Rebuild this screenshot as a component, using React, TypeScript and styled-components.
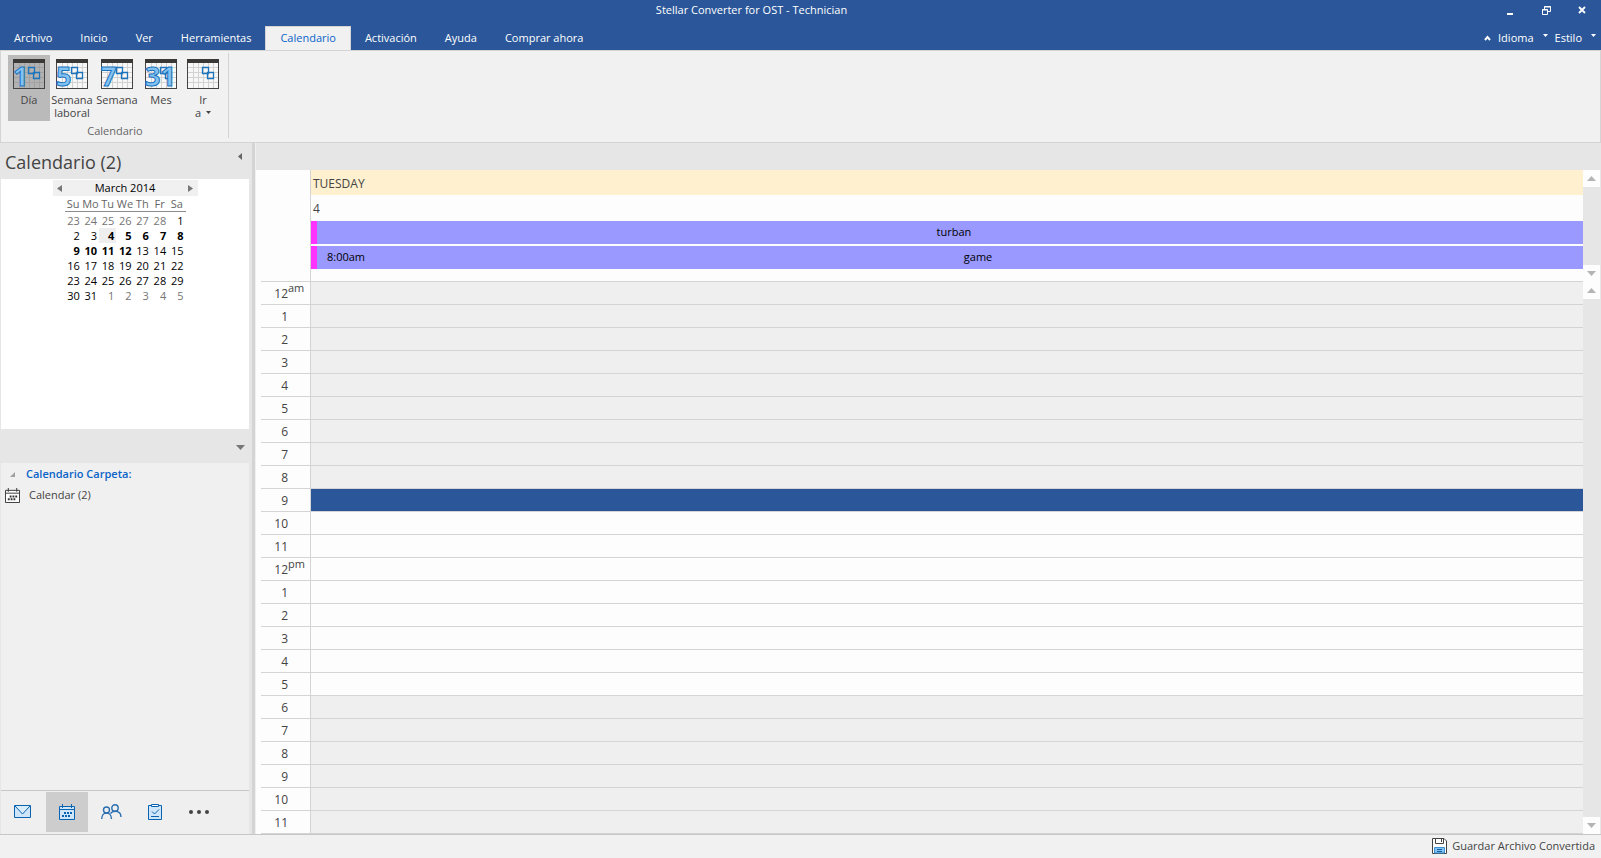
import React from 'react';
import styled, { createGlobalStyle } from 'styled-components';

const font = '"Open Sans", "Noto Sans", sans-serif';
const accent = '#2b579a';
const line = '#d4d4d4';

const GlobalStyle = createGlobalStyle`
  * { box-sizing: border-box; }
  body { margin: 0; background: #f0f0f0; color: #444; font: 11px/14px ${font}; }
  button { font: inherit; color: inherit; border: 0; padding: 0; background: none; cursor: default; }
  table { border-spacing: 0; }
  th, td { padding: 0; font-weight: 400; }
  svg { display: block; flex: none; }
`;

const Window = styled.div`
  min-height: 100vh;
  display: flex;
  flex-direction: column;
`;

const TitleBar = styled.header`
  display: grid;
  grid-template-columns: 1fr auto 1fr;
  height: 26px;
  padding-right: 8px;
  background: ${accent};
  color: #fff;
`;

const Title = styled.h1`
  grid-column: 2;
  margin: 0;
  padding-top: 3px;
  padding-right: 90px;
  font-size: 11px;
  line-height: 14px;
  font-weight: 400;
`;

const WindowButtons = styled.div`
  display: flex;
  justify-content: flex-end;
  gap: 14px;
`;

const WindowButton = styled.button`
  display: flex;
  align-items: center;
  justify-content: center;
  width: 22px;
  height: 20px;
`;

const MenuBar = styled.nav`
  display: flex;
  height: 24px;
  background: ${accent};
  color: #fff;
`;

const Tab = styled.button<{ $active?: boolean }>`
  height: ${p => (p.$active ? 25 : 24)}px;
  padding: 0 ${p => (p.$active ? 14 : 13)}px 2px;
  border: 1px solid ${p => (p.$active ? line : 'transparent')};
  border-bottom: 0;
  background: ${p => (p.$active ? '#f1f1f1' : 'transparent')};
  color: ${p => (p.$active ? '#0a64c8' : '#fff')};
`;

const MenuTools = styled.div`
  display: flex;
  align-items: center;
  gap: 7px;
  margin-left: auto;
  padding-right: 5px;
`;

const ToolButton = styled.button`
  display: flex;
  align-items: center;
  gap: 9px;
  height: 24px;
  svg { margin-top: -5px; }
`;

const Ribbon = styled.section`
  display: flex;
  height: 93px;
  padding: 2px 0 4px 7px;
  border: 1px solid ${line};
  background: #f1f1f1;
`;

const RibbonGroup = styled.div`
  display: flex;
  flex-direction: column;
  padding: 2px 4px 0 0;
  border-right: 1px solid ${line};
`;

const RibbonItems = styled.div`
  display: flex;
`;

const RibbonButton = styled.button<{ $width: number; $active?: boolean }>`
  display: flex;
  flex-direction: column;
  align-items: center;
  gap: 4px;
  width: ${p => p.$width}px;
  height: 66px;
  padding-top: 4px;
  background: ${p => (p.$active ? '#bababa' : 'transparent')};
`;

const RibbonText = styled.span`
  display: block;
  line-height: 13px;
  white-space: pre;
  text-align: center;
`;

const DropLine = styled.span`
  display: flex;
  align-items: center;
  justify-content: center;
  gap: 5px;
`;

const GroupName = styled.div`
  padding: 3px 2px 0 0;
  text-align: center;
  color: #666;
`;

const Workspace = styled.div`
  flex: 1;
  display: flex;
  border-bottom: 1px solid #c6c6c6;
  background: #e6e6e6;
`;

const Sidebar = styled.aside`
  display: flex;
  flex-direction: column;
  flex: none;
  width: 252px;
  padding: 0 3px 0 1px;
`;

const SideHeader = styled.div`
  display: flex;
  justify-content: space-between;
  height: 36px;
  padding: 6px 7px 0 4px;
`;

const SideTitle = styled.h2`
  margin: 0;
  font-size: 18px;
  line-height: 26px;
  font-weight: 400;
`;

const IconButton = styled.button`
  display: flex;
  align-items: center;
  justify-content: center;
  height: 14px;
`;

const DatePanel = styled.div`
  display: flex;
  flex-direction: column;
  align-items: center;
  height: 250px;
  padding-top: 1px;
  background: #fff;
`;

const MonthBar = styled.div`
  display: flex;
  align-items: center;
  justify-content: space-between;
  width: 145px;
  height: 16px;
  padding: 0 4px;
  background: #f0f0f0;
  color: #000;
`;

const MonthTable = styled.table`
  width: 121px;
  table-layout: fixed;
  color: #000;
  line-height: 15px;
  thead th { height: 15px; border-bottom: 1px solid #8c8c8c; color: #666; text-align: center; white-space: nowrap; }
  tbody::before { content: ''; display: block; height: 1px; }
`;

const DayCell = styled.td<{ $bold?: boolean; $muted?: boolean; $current?: boolean }>`
  height: 15px;
  padding-right: 2px;
  text-align: right;
  font-weight: ${p => (p.$bold ? 700 : 400)};
  color: ${p => (p.$muted ? '#757575' : '#000')};
  background: ${p => (p.$current ? '#efefef' : 'transparent')};
`;

const PanelSplitter = styled.div`
  display: flex;
  align-items: center;
  justify-content: flex-end;
  height: 34px;
  padding: 2px 4px 0 0;
`;

const FolderPanel = styled.div`
  flex: 1;
  background: #f0f0f0;
`;

const FolderHeading = styled.h3`
  display: flex;
  align-items: center;
  gap: 11px;
  height: 22px;
  margin: 0;
  padding-left: 9px;
  font-size: 11px;
  line-height: 14px;
  font-weight: 600;
  color: #0a64c8;
`;

const FolderItem = styled.button`
  display: flex;
  align-items: center;
  gap: 9px;
  width: 100%;
  height: 20px;
  padding-left: 4px;
`;

const NavBar = styled.nav`
  display: flex;
  align-items: flex-start;
  height: 44px;
  padding-top: 1px;
  border-top: 1px solid #c6c6c6;
  background: #efefef;
`;

const NavButton = styled.button<{ $active?: boolean }>`
  display: flex;
  align-items: center;
  justify-content: center;
  width: 44px;
  height: 40px;
  border: 0 solid transparent;
  border-width: 0 1px;
  background: ${p => (p.$active ? '#cdcdcd' : 'transparent')};
  background-clip: padding-box;
`;

const Divider = styled.div`
  flex: none;
  width: 4px;
  background: #d4d4d4;
  border-right: 1px solid #f0f0f0;
`;

const Main = styled.main`
  flex: 1;
  min-width: 0;
  display: flex;
  flex-direction: column;
  padding: 27px 1px 0 0;
`;

const Region = styled.div`
  display: flex;
  background: #fdfdfd;
`;

const HeaderGutter = styled.div`
  flex: none;
  width: 55px;
  padding-left: 5px;
  border-right: 1px solid ${line};
  display: flex;
  align-items: flex-end;
  &::after { content: ''; flex: 1; height: 1px; background: ${line}; }
`;

const DayHeader = styled.div`
  flex: 1;
  display: flex;
  flex-direction: column;
  height: 112px;
  border-bottom: 1px solid ${line};
`;

const DayName = styled.div`
  padding-left: 2px;
  height: 25px;
  line-height: 28px;
  font-size: 12px;
  background: #fff0cf;
`;

const DayNumber = styled.div`
  padding-left: 2px;
  height: 26px;
  line-height: 28px;
  font-size: 12px;
`;

const EventBar = styled.div`
  display: flex;
  height: 23px;
  line-height: 21px;
  margin-bottom: 2px;
  border-left: 6px solid #ff33ff;
  background: #9999ff;
  color: #000;
`;

const EventTime = styled.span`
  padding-left: 10px;
`;

const EventTitle = styled.span`
  flex: 1;
  padding-left: 8px;
  text-align: center;
`;

const HourTable = styled.table`
  flex: 1;
  margin-left: 5px;
  table-layout: fixed;
`;

const HourRow = styled.tr<{ $tone: string }>`
  th, td { height: 23px; border-bottom: 1px solid ${line}; }
  td { background: ${p => p.$tone}; }
`;

const HourLabel = styled.th`
  width: 50px;
  border-right: 1px solid ${line};
`;

const HourText = styled.span`
  display: flex;
  height: 22px;
  line-height: 24px;
  font-size: 12px;
`;

const HourNumber = styled.span`
  width: 27px;
  text-align: right;
`;

const HourSuffix = styled.span`
  font-size: 11px;
  line-height: 12px;
`;

const ScrollTrack = styled.div`
  display: flex;
  flex-direction: column;
  justify-content: space-between;
  width: 17px;
  flex: none;
  background: #e6e6e6;
`;

const ScrollButton = styled.button`
  display: flex;
  align-items: center;
  justify-content: center;
  height: 17px;
  background: #fdfdfd;
`;

const StatusBar = styled.footer`
  display: flex;
  justify-content: flex-end;
  align-items: center;
  height: 23px;
  padding: 0 6px 2px 0;
  background: #f1f1f1;
`;

const SaveButton = styled.button`
  display: flex;
  align-items: center;
  gap: 5px;
`;

const Triangle = ({ dir, w = 8, h = 4, color = '#b4b4b4' }: { dir: 'up' | 'down' | 'left' | 'right'; w?: number; h?: number; color?: string }) => {
  const points = {
    up: `0,${h} ${w / 2},0 ${w},${h}`,
    down: `0,0 ${w},0 ${w / 2},${h}`,
    left: `${w},0 ${w},${h} 0,${h / 2}`,
    right: `0,0 ${w},${h / 2} 0,${h}`,
  }[dir];
  return (
    <svg width={w} height={h} aria-hidden="true"><polygon points={points} fill={color} /></svg>
  );
};

const RibbonIcon = ({ digits, dark }: { digits?: string; dark?: boolean }) => (
  <svg width="32" height="30" viewBox="0 0 32 30" overflow="visible" aria-hidden="true">
    <rect x=".5" y=".5" width="31" height="29" fill={dark ? '#b2b2b2' : '#f7f7f7'} stroke="#444" />
    <path d="M6.5 4v25M11.5 4v25M16.5 4v25M21.5 4v25M26.5 4v25M1 8.500h30M1 13.500h30M1 18.500h30M1 23.500h30" stroke={dark ? '#a2a2a2' : '#d2d2d2'} fill="none" />
    <path d="M0 0h32v4H0z" fill="#3b3838" />
    <path d="M15.500 8.500h6v6h-6zM20.500 13.500h6v6h-6z" fill="none" stroke="#1c74bc" strokeWidth="1.300" />
    {digits && (
      <text x="0" y="27" fontFamily={font} fontSize="27" fontWeight="700" fill="#83c3f3" stroke="#1c74bc" strokeWidth="1">{digits}</text>
    )}
  </svg>
);

const CalendarGlyph = ({ size, color, fill }: { size: number; color: string; fill: string }) => (
  <svg width={size} height={size} viewBox="0 0 16 16" aria-hidden="true">
    <path d="M.5 2.500h15v13H.5z" fill={fill} stroke={color} />
    <path d="M.5 5.500h15M3.500 0v4M12.500 0v4" stroke={color} />
    <path d="M5 8h2v2H5zM8 8h2v2H8zM11 8h2v2h-2zM3 11h2v2H3zM6 11h2v2H6zM9 11h2v2H9z" fill={color} />
  </svg>
);

const blue = '#0a63b0';

const MailGlyph = () => (
  <svg width="18" height="14" aria-hidden="true">
    <path d="M.5 .5h16v12H.5z" fill="#cfe6fa" stroke={blue} />
    <path d="M1 1l7.500 8L16 1" fill="#d9ecfc" stroke={blue} />
  </svg>
);

const PeopleGlyph = () => (
  <svg width="21" height="16" fill="none" stroke="#2a6db0" strokeWidth="1.400" aria-hidden="true">
    <circle cx="5.500" cy="6" r="3" /><circle cx="14" cy="4" r="3.200" />
    <path d="M.7 15c0-3.500 2-6 4.800-6s5 2.500 5 6M9.500 9.500c1-1.500 2.500-2.300 4.500-2.300 3.500 0 6 2.200 6 5.800" />
  </svg>
);

const TaskGlyph = () => (
  <svg width="14" height="16" aria-hidden="true">
    <path d="M.5 1.500h13v14H.5z" fill="#cfe6fa" stroke={blue} />
    <path d="M3.500 .5h7v2h-7z" fill="#fff" stroke={blue} />
    <path d="M4 7.500l2.500 2.500L11 5.500M3 12.500h8" fill="none" stroke={blue} />
  </svg>
);

const SaveGlyph = () => (
  <svg width="15" height="16" aria-hidden="true">
    <path d="M.5 .5h11.500l2.500 2.500v12.500H.5z" fill="#fff" stroke="#444" />
    <path d="M3.500 .5v5h8v-5M9.500 1v3" fill="none" stroke="#444" />
    <path d="M2.500 9.500h10v5.500h-10z" fill="#83c3f3" stroke="#3c8fd0" />
    <path d="M5 11.500h5M5 13.500h5" stroke="#14609c" />
  </svg>
);

const tabs = ['Archivo', 'Inicio', 'Ver', 'Herramientas', 'Calendario', 'Activación', 'Ayuda', 'Comprar ahora'];

const views = [
  { label: 'Día', width: 42, digits: '1', active: true },
  { label: 'Semana\nlaboral', width: 44, digits: '5' },
  { label: 'Semana', width: 46, digits: '7' },
  { label: 'Mes', width: 42, digits: '31' },
];

const weekdays = ['Su', 'Mo', 'Tu', 'We', 'Th', 'Fr', 'Sa'];
const firstDay = new Date(2014, 1, 23);
const weeks = Array.from({ length: 6 }, (_, w) =>
  Array.from({ length: 7 }, (_, d) => new Date(firstDay.getFullYear(), firstDay.getMonth(), firstDay.getDate() + w * 7 + d)),
);

const hours = Array.from({ length: 24 }, (_, h) => h);
const hourTone = (h: number) => (h === 9 ? accent : h > 9 && h < 18 ? '#fdfdfd' : '#efefef');

const Scroll = () => (
  <ScrollTrack>
    <ScrollButton aria-label="Subir"><Triangle dir="up" w={9} h={5} /></ScrollButton>
    <ScrollButton aria-label="Bajar"><Triangle dir="down" w={9} h={5} /></ScrollButton>
  </ScrollTrack>
);

export default function App() {
  return (
    <Window>
      <GlobalStyle />
      <TitleBar>
        <Title>Stellar Converter for OST - Technician</Title>
        <WindowButtons>
          <WindowButton aria-label="Minimizar"><svg width="6" height="10"><path d="M0 8h6v2H0z" fill="#fff" /></svg></WindowButton>
          <WindowButton aria-label="Restaurar">
            <svg width="9" height="9" fill="none" stroke="#fff"><path d="M.5 3.500h5v5h-5zM0 4h6M2.500 3V.5h6v5H6M2 1h7" /></svg>
          </WindowButton>
          <WindowButton aria-label="Cerrar"><svg width="8" height="8"><path d="M1 1l6 6M7 1L1 7" stroke="#fff" strokeWidth="1.800" /></svg></WindowButton>
        </WindowButtons>
      </TitleBar>
      <MenuBar>
        {tabs.map(t => <Tab key={t} $active={t === 'Calendario'}>{t}</Tab>)}
        <MenuTools>
          <button aria-label="Contraer"><svg width="7" height="6"><path d="M1 5l2.500-3L6 5" stroke="#fff" strokeWidth="2" fill="none" /></svg></button>
          <ToolButton>Idioma<Triangle dir="down" w={5} h={3} color="#fff" /></ToolButton>
          <ToolButton>Estilo<Triangle dir="down" w={5} h={3} color="#fff" /></ToolButton>
        </MenuTools>
      </MenuBar>
      <Ribbon>
        <RibbonGroup>
          <RibbonItems>
            {views.map(v => (
              <RibbonButton key={v.label} $width={v.width} $active={v.active}>
                <RibbonIcon digits={v.digits} dark={v.active} />
                <RibbonText>{v.label}</RibbonText>
              </RibbonButton>
            ))}
            <RibbonButton $width={42}>
              <RibbonIcon />
              <RibbonText>Ir<DropLine>a<Triangle dir="down" w={5} h={3} color="#444" /></DropLine></RibbonText>
            </RibbonButton>
          </RibbonItems>
          <GroupName>Calendario</GroupName>
        </RibbonGroup>
      </Ribbon>
      <Workspace>
        <Sidebar>
          <SideHeader>
            <SideTitle>Calendario (2)</SideTitle>
            <IconButton aria-label="Contraer panel"><Triangle dir="left" w={4} h={7} color="#666" /></IconButton>
          </SideHeader>
          <DatePanel>
            <MonthBar>
              <IconButton aria-label="Mes anterior"><Triangle dir="left" w={5} h={7} color="#777" /></IconButton>
              March 2014
              <IconButton aria-label="Mes siguiente"><Triangle dir="right" w={5} h={7} color="#777" /></IconButton>
            </MonthBar>
            <MonthTable>
              <thead><tr>{weekdays.map(d => <th key={d} scope="col">{d}</th>)}</tr></thead>
              <tbody>
                {weeks.map((week, i) => (
                  <tr key={i}>
                    {week.map(d => {
                      const march = d.getMonth() === 2;
                      const n = d.getDate();
                      return <DayCell key={d.getTime()} $muted={!march} $bold={march && n >= 4 && n <= 12} $current={march && n === 4}>{n}</DayCell>;
                    })}
                  </tr>
                ))}
              </tbody>
            </MonthTable>
          </DatePanel>
          <PanelSplitter>
            <IconButton aria-label="Mostrar"><Triangle dir="down" w={9} h={5} color="#777" /></IconButton>
          </PanelSplitter>
          <FolderPanel>
            <FolderHeading>
              <svg width="5" height="5" aria-hidden="true"><path d="M5 0v5H0z" fill="#a0a0a0" /></svg>
              Calendario Carpeta:
            </FolderHeading>
            <FolderItem><CalendarGlyph size={15} color="#333" fill="#fff" />Calendar (2)</FolderItem>
          </FolderPanel>
          <NavBar>
            <NavButton aria-label="Correo"><MailGlyph /></NavButton>
            <NavButton aria-label="Calendario" $active><CalendarGlyph size={16} color={blue} fill="#cfe6fa" /></NavButton>
            <NavButton aria-label="Contactos"><PeopleGlyph /></NavButton>
            <NavButton aria-label="Tareas"><TaskGlyph /></NavButton>
            <NavButton aria-label="Más">
              <svg width="20" height="4" fill="#444"><circle cx="2" cy="2" r="2" /><circle cx="10" cy="2" r="2" /><circle cx="18" cy="2" r="2" /></svg>
            </NavButton>
          </NavBar>
        </Sidebar>
        <Divider />
        <Main>
          <Region>
            <HeaderGutter />
            <DayHeader>
              <DayName>TUESDAY</DayName>
              <DayNumber>4</DayNumber>
              <EventBar><EventTitle>turban</EventTitle></EventBar>
              <EventBar><EventTime>8:00am</EventTime><EventTitle>game</EventTitle></EventBar>
            </DayHeader>
            <Scroll />
          </Region>
          <Region>
            <HourTable>
              <tbody>
                {hours.map(h => (
                  <HourRow key={h} $tone={hourTone(h)}>
                    <HourLabel scope="row">
                      <HourText>
                        <HourNumber>{h % 12 || 12}</HourNumber>
                        {h % 12 === 0 && <HourSuffix>{h ? 'pm' : 'am'}</HourSuffix>}
                      </HourText>
                    </HourLabel>
                    <td />
                  </HourRow>
                ))}
              </tbody>
            </HourTable>
            <Scroll />
          </Region>
        </Main>
      </Workspace>
      <StatusBar>
        <SaveButton><SaveGlyph />Guardar Archivo Convertida</SaveButton>
      </StatusBar>
    </Window>
  );
}
